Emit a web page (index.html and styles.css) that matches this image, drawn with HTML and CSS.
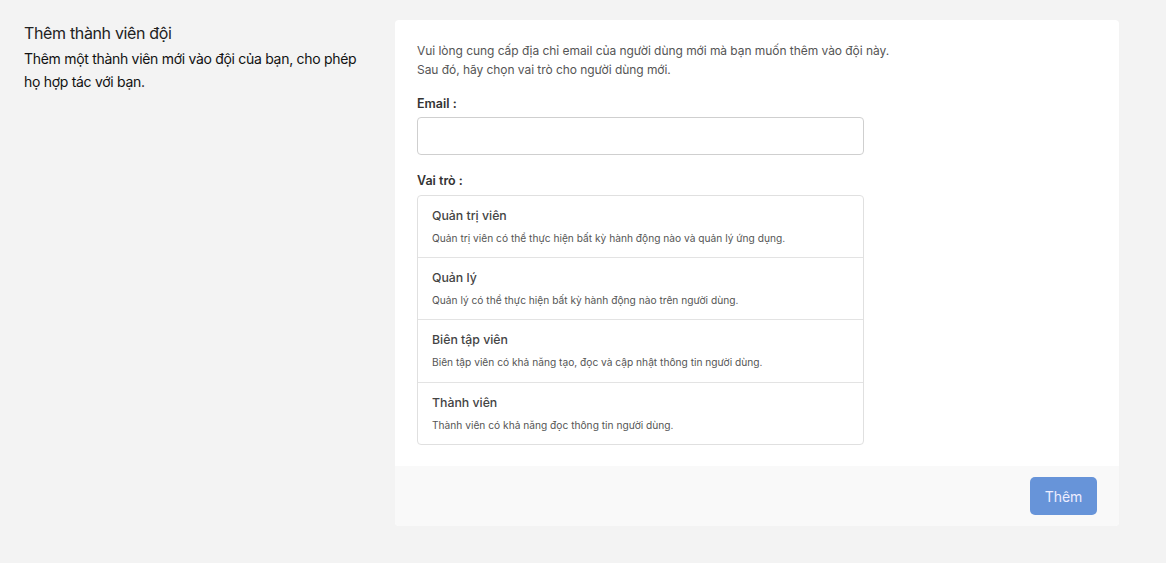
FILE: index.html
```html
<!DOCTYPE html>
<html lang="vi">
<head>
<meta charset="utf-8">
<title>Thêm thành viên đội</title>
<link rel="stylesheet" href="styles.css">
</head>
<body>
<div class="page">
  <div class="aside">
    <h3 class="aside-title">Thêm thành viên đội</h3>
    <p class="aside-desc">Thêm một thành viên mới vào đội của bạn, cho phép họ hợp tác với bạn.</p>
  </div>
  <div class="card">
    <div class="card-body">
      <p class="intro">Vui lòng cung cấp địa chỉ email của người dùng mới mà bạn muốn thêm vào đội này.<br>Sau đó, hãy chọn vai trò cho người dùng mới.</p>
      <label class="label">Email :</label>
      <input class="input" type="email">
      <div class="label label-role">Vai trò :</div>
      <div class="roles">
        <div class="role">
          <div class="role-name">Quản trị viên</div>
          <div class="role-desc">Quản trị viên có thể thực hiện bất kỳ hành động nào và quản lý ứng dụng.</div>
        </div>
        <div class="role">
          <div class="role-name">Quản lý</div>
          <div class="role-desc">Quản lý có thể thực hiện bất kỳ hành động nào trên người dùng.</div>
        </div>
        <div class="role role-tall">
          <div class="role-name">Biên tập viên</div>
          <div class="role-desc">Biên tập viên có khả năng tạo, đọc và cập nhật thông tin người dùng.</div>
        </div>
        <div class="role">
          <div class="role-name">Thành viên</div>
          <div class="role-desc">Thành viên có khả năng đọc thông tin người dùng.</div>
        </div>
      </div>
    </div>
    <div class="card-footer">
      <button class="btn">Thêm</button>
    </div>
  </div>
</div>
</body>
</html>
```

FILE: styles.css
```css
* { box-sizing: border-box; }
html, body { margin: 0; padding: 0; }
body {
  background: #f3f3f3;
  font-family: Inter, "Noto Sans", sans-serif;
  color: #222;
  width: 1166px;
  height: 563px;
}
.page {
  display: flex;
  padding: 20px 47px 0 24px;
  gap: 32px;
}
.aside {
  width: 339px;
  flex: none;
}
.aside-title {
  margin: 3px 0 0;
  font-size: 16px;
  font-weight: 400;
  line-height: 20px;
  letter-spacing: -0.35px;
  color: #222;
}
.aside-desc {
  margin: 4px 0 0;
  font-size: 14px;
  line-height: 23px;
  letter-spacing: -0.3px;
  color: #111;
}
.card {
  width: 724px;
  flex: none;
  background: #fff;
  border-radius: 4px;
  overflow: hidden;
}
.card-body {
  padding: 21px 22px 21px 22px;
}
.intro {
  margin: 0;
  font-size: 12px;
  line-height: 19px;
  letter-spacing: -0.05px;
  color: #555;
}
.label {
  display: block;
  margin-top: 17px;
  font-size: 12.5px;
  font-weight: 600;
  color: #333;
  line-height: 16px;
}
.input {
  display: block;
  margin-top: 5px;
  width: 447px;
  height: 38px;
  border: 1px solid #cfcfcf;
  border-radius: 4px;
  background: #fff;
}
.label-role {
  margin-top: 18px;
}
.roles {
  margin-top: 6px;
  width: 447px;
  border: 1px solid #e0e0e0;
  border-radius: 4px;
}
.role {
  height: 62px;
  padding: 12px 14px 0;
  border-top: 1px solid #e3e3e3;
}
.role:first-child { border-top: 0; height: 61px; }
.role-tall { height: 63px; }
.role-name {
  font-size: 12.3px;
  font-weight: 500;
  color: #444;
  line-height: 16px;
}
.role-desc {
  margin-top: 7px;
  font-size: 10.2px;
  color: #555;
  line-height: 14px;
}
.card-footer {
  background: #f9f9f9;
  height: 60px;
  display: flex;
  justify-content: flex-end;
  align-items: flex-start;
  padding: 11px 22px 0;
}
.btn {
  width: 67px;
  height: 38px;
  background: #6794d9;
  border: 0;
  border-radius: 5px;
  color: #eef;
  font-family: Inter, "Noto Sans", sans-serif;
  font-size: 14px;
}
```
